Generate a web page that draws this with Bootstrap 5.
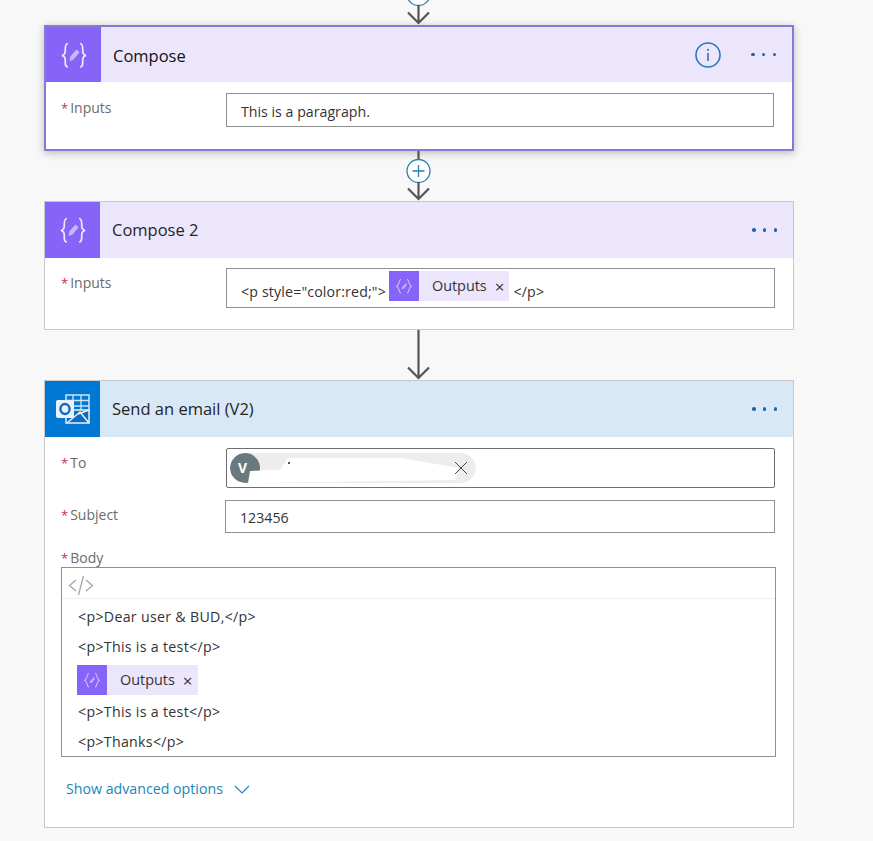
<!DOCTYPE html>
<html lang="en">
<head>
  <meta charset="UTF-8" />
  <title>Flow</title>
  <link href="https://cdn.jsdelivr.net/npm/bootstrap@5.3.0/dist/css/bootstrap.min.css" rel="stylesheet" />
  <style>
    html, body { height: 841px; overflow: hidden; }
    body {
      background-color: #f8f8f8;
      color: #333;
      font-family: "Open Sans", "Noto Sans", sans-serif;
      font-size: 14px;
      padding-left: 44px;
    }
    .flow { width: 750px; }
    .link-top { height: 25px; }
    .link-mid { height: 50px; }
    .link-art { display: block; width: 750px; }
    .step { background: #fff; border: 1px solid #c8c8c8; border-radius: 0; }
    .step-active { border: 2px solid #8a78d6; box-shadow: 0 2px 8px rgba(0,0,0,.25); height: 126px; }
    .step-two { height: 129px; }
    .step-three { height: 448px; }
    .step-head { height: 56px; background: #ece6fd; }
    .step-active .step-head { height: 55px; }
    .step-head-mail { background: #d8e8f6; }
    .step-tile { width: 55px; height: 100%; background: #8764f8; flex: none; }
    .step-tile-mail { background: #0078d4; }
    .step-title { font-size: 16.5px; margin-left: 12px; color: #252525; }
    .step-title-dark { color: #111; padding-top: 3px; }
    .dots { margin-right: 16px; width: 25px; }
    .dots i { display: block; width: 3.5px; height: 3.5px; border-radius: 50%; background: #1f66a8; }
    .info-mark { margin-right: 30px; }
    .step-body { padding: 11px 18px 0 16px; }
    .step-two .step-body { padding-top: 10px; }
    .step-active .step-body { padding-left: 15px; padding-right: 18px; }
    .field { display: flex; }
    .field-name { width: 165px; flex: none; color: #6b6b6b; font-size: 14px; line-height: 20px; padding-top: 5px; }
    .field-name b { color: #c4314b; font-weight: 400; font-size: 13px; margin-right: 2px; }
    .field-box {
      flex: 1;
      border: 1px solid #8f8f8f;
      background: #fff;
      height: 34px;
      padding: 3px 14px 0;
      display: flex;
      align-items: center;
      color: #333;
      font-size: 14.2px;
      white-space: nowrap;
    }
    .box-tall { height: 40px; align-items: flex-end; padding: 0 0 5px 14px; letter-spacing: .15px; }
    .box-subject { height: 33px; margin-left: -1px; }
    .pill-tag { display: inline-flex; align-items: center; height: 30px; background: #ece6fd; letter-spacing: 0; }
    .box-tall .pill-tag { margin: 0 4px 1px 3px; }
    .pill-tile { width: 30px; height: 30px; background: #8764f8; display: flex; align-items: center; justify-content: center; }
    .pill-name { margin-left: 13px; margin-right: 8px; color: #333; font-size: 14.4px; }
    .pill-x { font-size: 17px; line-height: 1; margin-right: 5px; color: #333; }
    .to-box { height: 40px; padding: 0 0 0 3px; border-color: #6e6e6e; border-radius: 2px; position: relative; }
    .person { width: 246px; height: 30px; border-radius: 15px; background: #ededed; position: relative; overflow: hidden; display: flex; align-items: center; justify-content: flex-end; padding-right: 8px; }
    .person-mark { position: absolute; left: 0; top: 0; width: 30px; height: 30px; border-radius: 50%; background: #69797e; color: #fff; font-weight: 700; font-size: 14px; line-height: 30px; padding-left: 8px; }
    .smear { position: absolute; left: 0; top: 0; }
    .body-box { width: 715px; height: 190px; border: 1px solid #8f8f8f; background: #fff; }
    .body-label { color: #6b6b6b; font-size: 14px; line-height: 16px; height: 17px; }
    .body-label b { color: #c4314b; font-weight: 400; font-size: 13px; margin-right: 2px; }
    .body-tools { height: 31px; border-bottom: 1px solid #efefef; padding: 5px 0 0 6px; }
    .body-lines { padding: 0 0 0 16px; color: #333; font-size: 14.2px; letter-spacing: .3px; }
    .body-line { height: 30px; line-height: 36px; white-space: nowrap; }
    .body-pill { height: 35px; padding-top: 6px; margin-left: -1px; }
    .adv-link { color: #1a86b8; font-size: 14.2px; text-decoration: none; margin-top: 22px; display: flex; align-items: center; gap: 11px; margin-left: 5px; line-height: 20px; }
    .gap-subject { margin-top: 12px; }
    .gap-body { margin-top: 17px; }
  </style>
</head>
<body>
  <div class="flow">
    <!-- top connector -->
    <div class="link-top">
      <svg class="link-art" width="750" height="25" viewBox="0 0 750 25">
        <circle cx="374.500" cy="-6" r="11.500" fill="#fff" stroke="#2a7fb0" stroke-width="1.300"/>
        <path d="M374.500 5V23M364 12.500L374.500 23L385 12.500" fill="none" stroke="#555" stroke-width="2.200"/>
      </svg>
    </div>

    <!-- Compose -->
    <div class="step step-active">
      <div class="step-head d-flex align-items-center">
        <div class="step-tile d-flex align-items-center justify-content-center">
          <svg width="30" height="30" viewBox="0 0 30 30" fill="none" stroke="#efe9ff" stroke-width="1.700">
            <path d="M9 3.500C5.500 3.500 6.500 8 6.200 12C6 14 5 15 3 15.500C5 16 6 17 6.200 19C6.500 23 5.500 27 9 27"/>
            <path d="M21 3.500C24.500 3.500 23.500 8 23.800 12C24 14 25 15 27 15.500C25 16 24 17 23.800 19C23.500 23 24.500 27 21 27"/>
            <path d="M10.500 21L11.300 16.500L17.500 9.500L20.500 12.300L14.400 19.800Z" fill="#c9b8fb" stroke="none"/>
          </svg>
        </div>
        <div class="step-title step-title-dark">Compose</div>
        <svg class="info-mark ms-auto" width="26" height="26" viewBox="0 0 26 26">
          <circle cx="13" cy="13" r="12" fill="none" stroke="#2b78b8" stroke-width="1.600"/>
          <path d="M13 11V19" stroke="#3a6ea5" stroke-width="1.600"/>
          <circle cx="13" cy="7.800" r="1.100" fill="#3a6ea5"/>
        </svg>
        <div class="dots d-flex justify-content-between"><i></i><i></i><i></i></div>
      </div>
      <div class="step-body">
        <div class="field">
          <div class="field-name"><b>*</b>Inputs</div>
          <div class="field-box">This is a paragraph.</div>
        </div>
      </div>
    </div>

    <!-- connector with plus -->
    <div class="link-mid">
      <svg class="link-art" width="750" height="50" viewBox="0 0 750 50">
        <path d="M374.500 0V9" fill="none" stroke="#555" stroke-width="2.200"/>
        <circle cx="374.500" cy="20" r="11.500" fill="#fff" stroke="#2a7fb0" stroke-width="1.300"/>
        <path d="M374.500 14V26M368.500 20H380.500" stroke="#2a7fb0" stroke-width="1.300"/>
        <path d="M374.500 31V48M364 37.500L374.500 48L385 37.500" fill="none" stroke="#555" stroke-width="2.200"/>
      </svg>
    </div>

    <!-- Compose 2 -->
    <div class="step step-two">
      <div class="step-head d-flex align-items-center">
        <div class="step-tile d-flex align-items-center justify-content-center">
          <svg width="30" height="30" viewBox="0 0 30 30" fill="none" stroke="#efe9ff" stroke-width="1.700">
            <path d="M9 3.500C5.500 3.500 6.500 8 6.200 12C6 14 5 15 3 15.500C5 16 6 17 6.200 19C6.500 23 5.500 27 9 27"/>
            <path d="M21 3.500C24.500 3.500 23.500 8 23.800 12C24 14 25 15 27 15.500C25 16 24 17 23.800 19C23.500 23 24.500 27 21 27"/>
            <path d="M10.500 21L11.300 16.500L17.500 9.500L20.500 12.300L14.400 19.800Z" fill="#c9b8fb" stroke="none"/>
          </svg>
        </div>
        <div class="step-title">Compose 2</div>
        <div class="dots d-flex justify-content-between ms-auto"><i></i><i></i><i></i></div>
      </div>
      <div class="step-body">
        <div class="field">
          <div class="field-name"><b>*</b>Inputs</div>
          <div class="field-box box-tall">
            <span>&lt;p style="color:red;"&gt;</span>
            <span class="pill-tag">
              <span class="pill-tile">
                <svg width="18" height="18" viewBox="0 0 30 30" fill="none" stroke="#c9b8ff" stroke-width="2">
                  <path d="M10 4C6 4 8 13 3 15.500C8 18 6 27 10 27M20 4C24 4 22 13 27 15.500C22 18 24 27 20 27"/>
                  <path d="M11 20.500L12 17L18 10.500L20 12.800L14.400 19.400Z" fill="#c9b8ff" stroke="none"/>
                </svg>
              </span>
              <span class="pill-name">Outputs</span>
              <span class="pill-x">×</span>
            </span>
            <span>&lt;/p&gt;</span>
          </div>
        </div>
      </div>
    </div>

    <!-- straight connector -->
    <div class="link-mid">
      <svg class="link-art" width="750" height="50" viewBox="0 0 750 50">
        <path d="M374.500 0V48M364 37.500L374.500 48L385 37.500" fill="none" stroke="#555" stroke-width="2.200"/>
      </svg>
    </div>

    <!-- Send an email -->
    <div class="step step-three">
      <div class="step-head step-head-mail d-flex align-items-center">
        <div class="step-tile step-tile-mail d-flex align-items-center justify-content-center">
          <svg width="36" height="34" viewBox="0 0 36 34">
            <path d="M11 3H34V19H11Z" fill="none" stroke="#cfe4f7" stroke-width="1.500"/>
            <path d="M18 3V19M26 3V19M11 8.500H34M11 14H34" stroke="#cfe4f7" stroke-width="1.300"/>
            <path d="M11 18L34 18V31H11Z" fill="#0f6cbd" stroke="#e6f1fb" stroke-width="1.500"/>
            <path d="M12 31L25 20L34 31M23 22L34 18" fill="none" stroke="#e6f1fb" stroke-width="1.500"/>
            <rect x="1" y="8" width="18" height="18" rx="2" fill="#e9f2fb"/>
            <ellipse cx="10" cy="17" rx="4.600" ry="5" fill="none" stroke="#0f6cbd" stroke-width="2.400"/>
          </svg>
        </div>
        <div class="step-title">Send an email (V2)</div>
        <div class="dots d-flex justify-content-between ms-auto"><i></i><i></i><i></i></div>
      </div>
      <div class="step-body">
        <div class="field">
          <div class="field-name"><b>*</b>To</div>
          <div class="field-box to-box">
            <div class="person">
              <span class="person-mark">V</span>
              <svg class="smear" width="246" height="30" viewBox="0 0 246 30">
                <path d="M20 18L50 17L58 5L172 5L228 15L226 27L90 29L18 30Z" fill="#fff"/>
                <path d="M58 9h2v2h-2z" fill="#555"/>
              </svg>
              <svg class="position-relative" width="14" height="14" viewBox="0 0 14 14"><path d="M1 1L13 13M13 1L1 13" stroke="#444" stroke-width="1"/></svg>
            </div>
          </div>
        </div>
        <div class="field gap-subject">
          <div class="field-name"><b>*</b>Subject</div>
          <div class="field-box box-subject">123456</div>
        </div>
        <div class="gap-body">
          <div class="body-label"><b>*</b>Body</div>
          <div class="body-box">
            <div class="body-tools">
              <svg width="26" height="20" viewBox="0 0 26 20" fill="none" stroke="#a6a6a6" stroke-width="1.300"><path d="M8 5L1.500 10.500L8 16M18 5L24.500 10.500L18 16M15.500 1L10.500 20"/></svg>
            </div>
            <div class="body-lines">
              <div class="body-line">&lt;p&gt;Dear user &amp; BUD,&lt;/p&gt;</div>
              <div class="body-line">&lt;p&gt;This is a test&lt;/p&gt;</div>
              <div class="body-pill">
                <span class="pill-tag">
                  <span class="pill-tile">
                    <svg width="18" height="18" viewBox="0 0 30 30" fill="none" stroke="#c9b8ff" stroke-width="2">
                      <path d="M10 4C6 4 8 13 3 15.500C8 18 6 27 10 27M20 4C24 4 22 13 27 15.500C22 18 24 27 20 27"/>
                      <path d="M11 20.500L12 17L18 10.500L20 12.800L14.400 19.400Z" fill="#c9b8ff" stroke="none"/>
                    </svg>
                  </span>
                  <span class="pill-name">Outputs</span>
                  <span class="pill-x">×</span>
                </span>
              </div>
              <div class="body-line">&lt;p&gt;This is a test&lt;/p&gt;</div>
              <div class="body-line">&lt;p&gt;Thanks&lt;/p&gt;</div>
            </div>
          </div>
        </div>
        <a class="adv-link" href="#">Show advanced options
          <svg width="16" height="9" viewBox="0 0 16 9" fill="none" stroke="#1a86b8" stroke-width="1.100"><path d="M1 1L8 8L15 1"/></svg>
        </a>
      </div>
    </div>
  </div>
  <script src="https://cdn.jsdelivr.net/npm/bootstrap@5.3.0/dist/js/bootstrap.bundle.min.js"></script>
</body>
</html>
